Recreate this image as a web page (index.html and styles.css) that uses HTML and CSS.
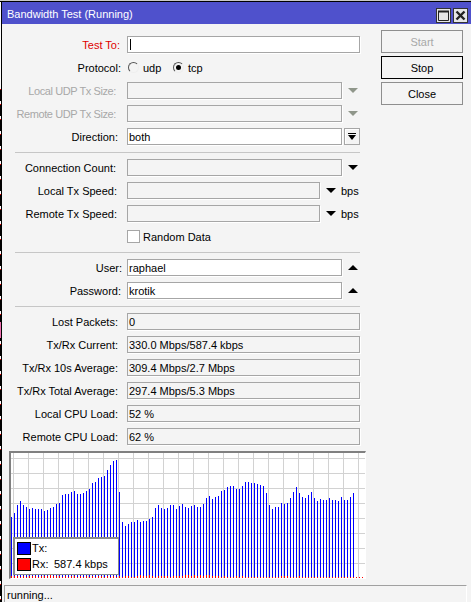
FILE: index.html
```html
<!DOCTYPE html>
<html lang="en">
<head>
<meta charset="utf-8">
<title>Bandwidth Test</title>
<link rel="stylesheet" href="styles.css">
</head>
<body>
<div class="page">
  <div class="edge"></div>
  <div class="window">
    <header class="titlebar">
      <span class="title">Bandwidth Test (Running)</span>
      <span class="winbtns">
        <span class="winbtn"><svg width="13" height="13" viewBox="0 0 13 13"><path d="M1.5 2.5h10v9h-10z" fill="none" stroke="#222" stroke-width="1"/><path d="M1 2.5h11" stroke="#222" stroke-width="2"/></svg></span>
        <span class="winbtn"><svg width="13" height="13" viewBox="0 0 13 13"><path d="M2.5 2.5l8 8M10.5 2.5l-8 8" stroke="#222" stroke-width="2.4"/></svg></span>
      </span>
    </header>
    <div class="main">
      <div class="form">
        <div class="row"><label class="lbl req off-r0">Test To:</label><div class="field on"><i class="caret"></i></div></div>
        <div class="row"><label class="lbl off-r1">Protocol:</label>
          <div class="radios">
            <span class="radio"></span><span class="opt">udp</span>
            <span class="radio sel"></span><span class="opt">tcp</span>
          </div>
        </div>
        <div class="row"><label class="lbl dis off-r4">Local UDP Tx Size:</label><div class="field short"></div><i class="arrow down dim"></i></div>
        <div class="row"><label class="lbl dis off-r4">Remote UDP Tx Size:</label><div class="field short"></div><i class="arrow down dim"></i></div>
        <div class="row"><label class="lbl off-r2">Direction:</label><div class="field short on">both</div>
          <span class="dropbtn"><svg width="8" height="8" viewBox="0 0 8 8"><path d="M0 .5h8" stroke="#000"/><path d="M0 2h8L4 7z" fill="#000"/></svg></span>
        </div>
        <hr class="sep">
        <div class="row"><label class="lbl off-r4">Connection Count:</label><div class="field short"></div><i class="arrow down"></i></div>
        <div class="row"><label class="lbl off-r3">Local Tx Speed:</label><div class="field speed"></div><i class="arrow down unit-arrow"></i><span class="unit">bps</span></div>
        <div class="row"><label class="lbl off-r3">Remote Tx Speed:</label><div class="field speed"></div><i class="arrow down unit-arrow"></i><span class="unit">bps</span></div>
        <div class="row"><span class="lbl"></span><span class="check"></span><span class="opt">Random Data</span></div>
        <hr class="sep">
        <div class="row"><label class="lbl">User:</label><div class="field short on">raphael</div><i class="arrow up"></i></div>
        <div class="row"><label class="lbl off-r1">Password:</label><div class="field short on">krotik</div><i class="arrow up"></i></div>
        <hr class="sep">
        <div class="row"><label class="lbl off-r2">Lost Packets:</label><div class="field">0</div></div>
        <div class="row"><label class="lbl off-r2">Tx/Rx Current:</label><div class="field">330.0 Mbps/587.4 kbps</div></div>
        <div class="row"><label class="lbl off-r2">Tx/Rx 10s Average:</label><div class="field">309.4 Mbps/2.7 Mbps</div></div>
        <div class="row"><label class="lbl off-r2">Tx/Rx Total Average:</label><div class="field">297.4 Mbps/5.3 Mbps</div></div>
        <div class="row"><label class="lbl off-r2">Local CPU Load:</label><div class="field">52 %</div></div>
        <div class="row"><label class="lbl off-r2">Remote CPU Load:</label><div class="field">62 %</div></div>
      </div>
      <div class="actions">
        <button class="btn off" type="button">Start</button>
        <button class="btn focus" type="button">Stop</button>
        <button class="btn" type="button">Close</button>
      </div>
    </div>
    <div class="graph">
      <svg id="chart" class="chart" width="354" height="125" viewBox="0 0 354 125"></svg>
      <div class="legend">
        <div class="legend-row"><i class="swatch tx"></i><span>Tx:</span></div>
        <div class="legend-row"><i class="swatch rx"></i><span class="rx-label">Rx:</span><span>587.4 kbps</span></div>
      </div>
    </div>
    <footer class="status">running...</footer>
  </div>
</div>
<script src="chart.js"></script>
</body>
</html>
```

FILE: styles.css
```css
* { box-sizing: border-box; }
html, body { margin: 0; height: 100%; overflow: hidden; }
body {
  background: #c8c8c8;
  padding-top: 1px;
  font: 11px/17px "Liberation Sans", sans-serif;
  color: #000;
}
.page {
  display: flex;
  height: 601px;
  border-top: 1px solid #000;
}
.edge {
  flex: none;
  width: 2px;
  border-right: 1px solid #000;
  background:
    linear-gradient(#fff 0 84px, transparent 84px),
    linear-gradient(transparent 0 320px, #ee6fb0 320px 336px, transparent 336px),
    repeating-linear-gradient(#000 0 9px, #fff 9px 12px, #e00000 12px 13px, #000 13px 15px);
}
.window { flex: 1; min-width: 0; background: #f4f4f4; }

.titlebar {
  height: 22px;
  background: #4f51cc;
  color: #fff;
  display: flex;
  align-items: center;
  justify-content: space-between;
  padding: 0 3px 0 5px;
}
.title { padding-top: 2px; }
.winbtns { display: flex; gap: 2px; margin-top: 5px; margin-bottom: 1px; }
.winbtn {
  width: 15px;
  height: 15px;
  background: #e6e6e6;
  border: 1px solid #333;
  display: flex;
  align-items: center;
  justify-content: center;
}
.winbtn svg { display: block; margin: 0; }

.main { display: flex; padding: 12px 0 0 13px; height: 427px; }
.form { width: 345px; flex: none; display: flex; flex-direction: column; gap: 6px; }
.actions { margin: -6px 0 0 21px; width: 82px; display: flex; flex-direction: column; gap: 3px; }

.row { display: flex; align-items: center; height: 17px; flex: none; white-space: nowrap; }
.lbl { flex: none; width: 112px; height: 17px; padding-top: 1px; text-align: right; padding-right: 5px; }
.off-r0 { padding-right: 7px; }
.off-r1 { padding-right: 6px; }
.off-r2 { padding-right: 9px; }
.off-r3 { padding-right: 10px; }
.off-r4 { padding-right: 11px; }
.req { color: #e00000; }
.dis { color: #a8a8a8; letter-spacing: -0.4px; }

.field {
  flex: 1;
  height: 17px;
  min-width: 0;
  border: 1px solid #a6a6a6;
  box-shadow: 1px 1px 0 #fff;
  padding: 1px 0 0 1px;
  line-height: 15px;
  position: relative;
}
.field.short { flex: none; width: 215px; }
.field.speed { flex: none; width: 193px; }
.field.on { background: #fff; }
.caret { position: absolute; left: 2px; top: 2px; width: 1px; height: 11px; background: #000; }

.radios { display: flex; align-items: center; padding-left: 1px; }
.radio {
  width: 11px;
  height: 11px;
  border-radius: 50%;
  border: 1px solid;
  border-color: #555 #eee #eee #555;
  background: #f4f4f4;
  position: relative;
  flex: none;
}
.radio.sel::after {
  content: "";
  position: absolute;
  left: 2px;
  top: 2px;
  width: 5px;
  height: 5px;
  border-radius: 50%;
  background: #000;
}
.opt { margin-left: 4px; padding-top: 1px; height: 17px; }
.radios .opt { width: 30px; }
.check {
  width: 13px;
  height: 13px;
  flex: none;
  background: #fff;
  border: 1px solid #a6a6a6;
}
.check + .opt { margin-left: 3px; }

.arrow { flex: none; width: 0; height: 0; margin-left: 6px; border-left: 5px solid transparent; border-right: 5px solid transparent; }
.arrow.down { border-top: 5px solid #000; }
.arrow.up { border-bottom: 5px solid #000; }
.arrow.dim { border-top-color: #8f968a; }
.unit { margin-left: 5px; padding-top: 1px; height: 17px; }
.dropbtn {
  flex: none;
  width: 16px;
  height: 17px;
  margin-left: 2px;
  border: 1px solid #a6a6a6;
  display: flex;
  align-items: center;
  justify-content: center;
  box-shadow: inset 1px 1px 0 #fff;
}

.sep { border: 0; height: 1px; background: #c6c6c6; margin: 1px 0 0; flex: none; }

.btn {
  height: 23px;
  padding: 2px 0 0;
  background: #f4f4f4;
  border: 1px solid #8e8e8e;
  font: inherit;
  color: #000;
}
.btn.off { color: #a8a8a8; }
.btn.focus { border-color: #000; }

.graph {
  position: relative;
  margin: 0 0 0 7px;
  width: 357px;
  height: 128px;
  background: #fff;
  border-style: solid;
  border-width: 2px 1px 1px 2px;
  border-color: #808080 #fff #fff #808080;
}
.chart { display: block; }
.legend {
  position: absolute;
  left: 2px;
  top: 84px;
  width: 106px;
  height: 38px;
  padding: 2px 0 0 2px;
  background: #fff;
  border: 1px solid #8a8a8a;
  border-width: 2px 1px 1px 2px;
}
.legend-row { display: flex; align-items: center; height: 15px; margin-bottom: 1px; }
.swatch { flex: none; width: 14px; height: 13px; border: 1px solid #000; margin-right: 1px; }
.swatch.tx { background: #0000ff; }
.swatch.rx { background: #ff0000; }
.rx-label { width: 22px; }

.status {
  margin: 6px 0 0 2px;
  width: 463px;
  height: 18px;
  padding: 1px 0 0 2px;
  border-top: 1px solid #a0a0a0;
  border-left: 1px solid #a0a0a0;
  border-right: 1px solid #fff;
}
```

FILE: chart.js
```js
// Bar tops are pixel rows in the chart; the red row holds each bar's height.
var tx = [64,60,52,48,52,54,56,55,56,56,56,58,57,55,54,51,50,42,41,41,39,38,41,41,40,38,36,30,29,25,24,23,17,12,8,7,39,69,73,71,69,69,67,69,68,68,66,64,55,52,55,56,55,52,52,56,53,51,54,55,53,52,54,54,51,45,43,46,44,43,38,37,34,33,33,36,36,33,29,29,30,30,31,32,33,40,52,56,54,54,50,51,50,45,39,34,40,44,45,42,39,45,48,46,47,47,45,47,47,48,44,47,47,44,40];
var rx = "222121222122232221212212121212212121212211232232122221222233232323322212111212111111111111222111211111111111111111111111";
var NS = "http://www.w3.org/2000/svg";
var chart = document.getElementById("chart");

function path(d, color) {
  var p = document.createElementNS(NS, "path");
  p.setAttribute("d", d);
  p.setAttribute("stroke", color);
  p.setAttribute("fill", "none");
  p.setAttribute("shape-rendering", "crispEdges");
  chart.appendChild(p);
}

var grid = "";
for (var x = 2; x < 354; x += 15) grid += "M" + (x + 0.5) + " 0V125";
for (var y = 5; y < 125; y += 15) grid += "M0 " + (y + 0.5) + "H354";
path(grid, "#d2d2d2");

var blue = "";
tx.forEach(function (top, i) { blue += "M" + (i * 3 + 0.5) + " " + top + "V125"; });
path(blue, "#0000ff");

var red = "";
for (var i = 0; i < 118; i++) red += "M" + (i * 3 + 0.5) + " " + (125 - Number(rx[i])) + "V125";
path(red, "#ff0000");
```
